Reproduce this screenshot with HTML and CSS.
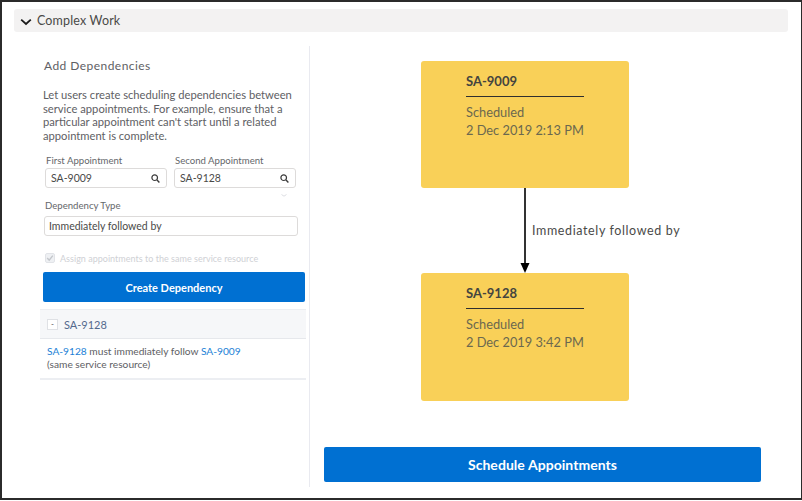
FILE: index.html
```html
<!DOCTYPE html>
<html lang="en">
<head>
<meta charset="utf-8">
<title>Complex Work</title>
<link rel="stylesheet" href="styles.css">
</head>
<body>
<div class="frame">
  <header class="section-bar">
    <svg class="chevron" width="12" height="8" viewBox="0 0 12 8"><path d="M1.2 1.6 L6 6 L10.8 1.6" fill="none" stroke="#1b1b1b" stroke-width="1.8"/></svg>
    <span>Complex Work</span>
  </header>
  <div class="content">
    <section class="side">
      <h2 class="side-title">Add Dependencies</h2>
      <p class="intro">Let users create scheduling dependencies between service appointments. For example, ensure that a particular appointment can't start until a related appointment is complete.</p>
      <div class="lookups">
        <div class="field">
          <label class="label">First Appointment</label>
          <div class="input"><span>SA-9009</span>
            <svg class="search" width="9" height="9" viewBox="0 0 9 9"><circle cx="3.7" cy="3.7" r="2.8" fill="none" stroke="#3b3b3b" stroke-width="1.2"/><path d="M5.8 5.8 L8.4 8.4" stroke="#3b3b3b" stroke-width="1.4"/></svg>
          </div>
        </div>
        <div class="field">
          <label class="label">Second Appointment</label>
          <div class="input"><span>SA-9128</span>
            <svg class="search" width="9" height="9" viewBox="0 0 9 9"><circle cx="3.7" cy="3.7" r="2.8" fill="none" stroke="#3b3b3b" stroke-width="1.2"/><path d="M5.8 5.8 L8.4 8.4" stroke="#3b3b3b" stroke-width="1.4"/></svg>
          </div>
          <svg class="mini-caret" width="6" height="3" viewBox="0 0 6 3"><path d="M0.5 0.5 L3 2.2 L5.5 0.5" fill="none" stroke="#d3d6db" stroke-width="0.8"/></svg>
        </div>
      </div>
      <div class="type-field">
        <label class="label">Dependency Type</label>
        <div class="input input-wide"><span>Immediately followed by</span></div>
      </div>
      <div class="check-row">
        <svg class="check" width="10" height="10" viewBox="0 0 10 10"><rect x="0.5" y="0.5" width="9" height="9" rx="1.5" fill="#eef0f3" stroke="#e1e3e7"/><path d="M2.2 5 L4.2 7.2 L7.8 2.6" fill="none" stroke="#c3c6cb" stroke-width="1.4"/></svg>
        <span>Assign appointments to the same service resource</span>
      </div>
      <button class="btn btn-create">Create Dependency</button>
      <div class="group-row">
        <span class="toggle">-</span>
        <span>SA-9128</span>
      </div>
      <div class="dep-row">
        <a class="link">SA-9128</a> must immediately follow <a class="link">SA-9009</a><br>(same service resource)
      </div>
    </section>
    <section class="diagram">
      <div class="flow">
        <article class="card">
          <h3 class="card-title">SA-9009</h3>
          <div class="card-meta">Scheduled</div>
          <div class="card-meta">2 Dec 2019 2:13 PM</div>
        </article>
        <div class="connector">
          <svg class="arrow" width="12" height="85" viewBox="0 0 12 85"><path d="M6 0 V76" stroke="#333" stroke-width="2"/><path d="M1.5 75 H10.5 L6 85 Z" fill="#000"/></svg>
          <span class="connector-label">Immediately followed by</span>
        </div>
        <article class="card card-last">
          <h3 class="card-title">SA-9128</h3>
          <div class="card-meta">Scheduled</div>
          <div class="card-meta">2 Dec 2019 3:42 PM</div>
        </article>
      </div>
      <button class="btn btn-schedule">Schedule Appointments</button>
    </section>
  </div>
</div>
</body>
</html>
```
FILE: styles.css
```css
* { box-sizing: border-box; }
html, body { margin: 0; padding: 0; }
body { width: 802px; height: 501px; overflow: hidden; background: #fff; font-family: "Lato", "Open Sans", sans-serif; color: #3e3e3c; }
.frame { width: 802px; height: 500px; border: 2px solid #2b2b2b; border-right-width: 1px; padding: 7px 12px 0; background: #fff; }
.section-bar { height: 23px; width: 774px; background: #f3f2f2; border-radius: 3px; display: flex; align-items: center; padding-left: 6px; gap: 5px; font-size: 12.5px; letter-spacing: 0.15px; color: #4a4a48; }
.chevron { flex: none; margin-top: 2px; }
.content { display: flex; margin-top: 14px; height: 441px; }
.side { width: 296px; padding-left: 26px; border-right: 1px solid #e9eaf0; padding-right: 3px; }
.side-title { margin: 0; padding: 12px 0 0 4px; font-size: 12px; line-height: 15px; font-weight: 400; letter-spacing: 0.45px; color: #5e6064; }
.intro { margin: 15px 0 0 3px; font-size: 11.2px; line-height: 13.5px; color: #5e6064; width: 262px; }
.lookups { display: flex; gap: 7px; margin: 12px 0 0 5px; }
.field { width: 122px; position: relative; }
.mini-caret { position: absolute; right: 9px; bottom: -9px; }
.label { display: block; font-size: 9.6px; line-height: 13px; color: #65676b; padding-left: 1px; }
.input { height: 20px; margin-top: 1px; border: 1px solid #dddbda; border-radius: 3px; background: #fff; display: flex; align-items: center; justify-content: space-between; padding: 0 6px 0 5px; font-size: 10.5px; color: #4a4a48; }
.search { flex: none; margin-right: 0; }
.type-field { margin: 11px 0 0 4px; }
.input-wide { width: 254px; margin-top: 4px; padding-left: 4px; }
.check-row { display: flex; align-items: center; gap: 5px; margin: 17px 0 0 5px; height: 10px; font-size: 9px; letter-spacing: 0.02px; color: #cfd1d5; }
.check { flex: none; }
.btn { display: block; border: 0; border-radius: 2px; background: #0070d2; color: #fff; font-family: inherit; text-align: center; padding: 0; }
.btn-create { width: 262px; height: 30px; margin: 9px 0 0 3px; font-size: 11px; font-weight: 700; }
.group-row { height: 30px; margin-top: 7px; width: 266px; margin-right: -3px; background: #f6f7f9; border-top: 1px solid #eceef2; border-bottom: 1px solid #e6e8ec; display: flex; align-items: center; gap: 6px; padding-left: 7px; font-size: 11px; color: #54698d; }
.toggle { width: 11px; height: 11px; border: 1px solid #dfe1e5; background: #fff; font-size: 8px; line-height: 8px; text-align: center; color: #444; }
.dep-row { width: 266px; height: 41px; padding: 6px 0 0 7px; border-bottom: 2px solid #eceef2; font-size: 10.2px; line-height: 13px; color: #5e6064; }
.link { color: #1b7fd6; }
.diagram { width: 464px; padding-left: 14px; display: flex; flex-direction: column; }
.flow { width: 437px; height: 401px; padding: 15px 0 0 97px; }
.card { width: 208px; height: 127px; background: #f9d058; border-radius: 3px; padding: 12px 45px 0; }
.card-last { height: 128px; }
.card-title { margin: 0 0 6px; padding-bottom: 6px; border-bottom: 1.5px solid #2f2f2f; font-size: 13px; line-height: 17px; font-weight: 700; color: #44443f; }
.card-meta { font-size: 12.8px; line-height: 18px; color: #6b684f; white-space: nowrap; }
.connector { height: 85px; display: flex; align-items: center; margin-left: 98px; }
.arrow { flex: none; }
.connector-label { margin-left: 1px; font-size: 12.5px; letter-spacing: 0.62px; color: #4a4a48; white-space: nowrap; }
.btn-schedule { width: 437px; height: 35px; font-size: 14px; font-weight: 700; letter-spacing: 0.05px; }
```
